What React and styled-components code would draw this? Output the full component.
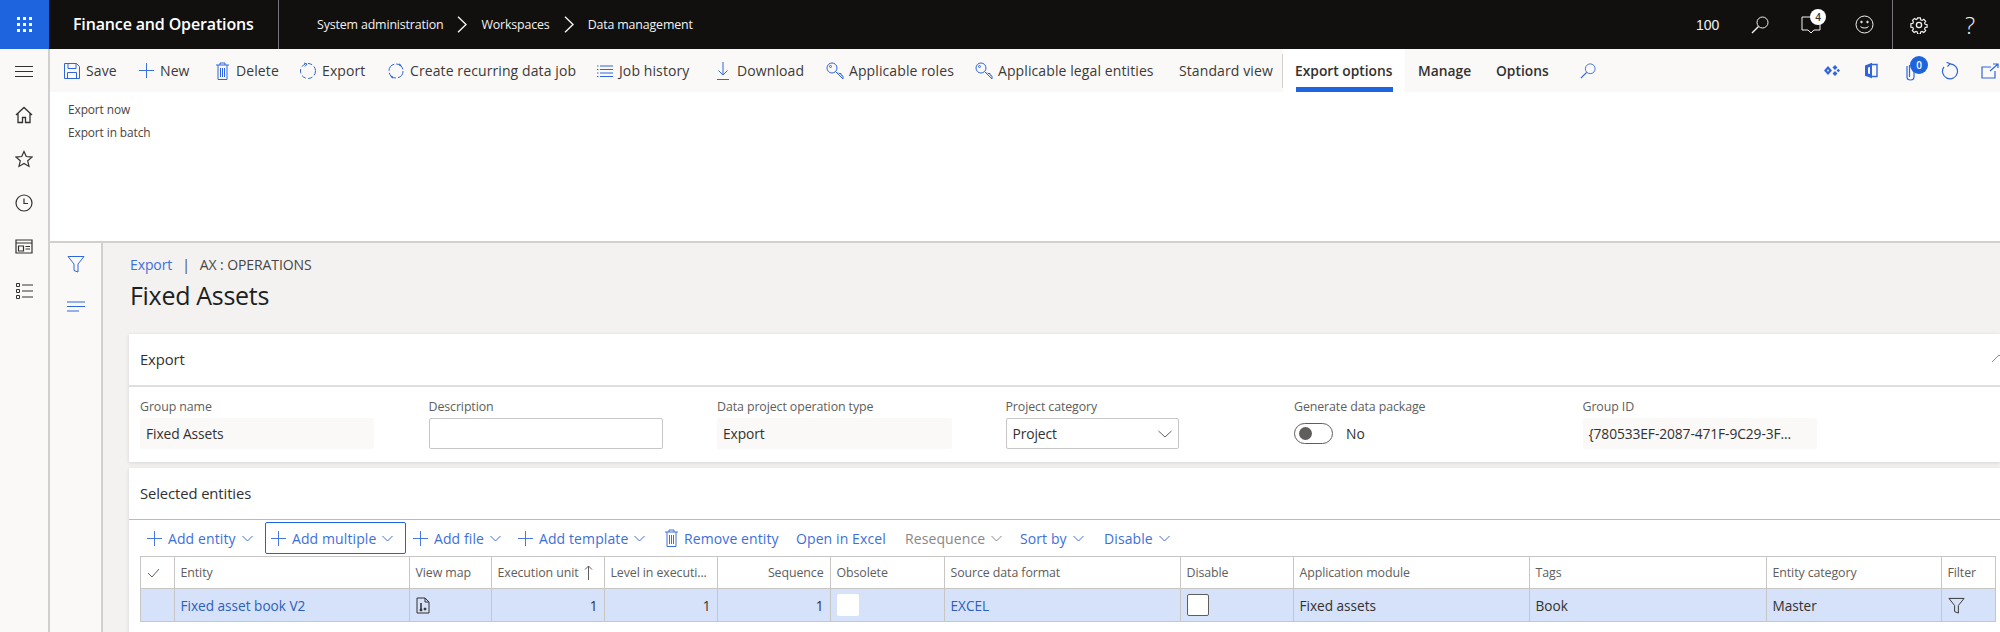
import React from "react"
import styled, {createGlobalStyle} from "styled-components"

const BLUE = "#2f66dc"
const LINE = "#c8c6c4"
const GRID_COLS = "33.5px 235px 82px 113px 113px 113px 114px 236px 113px 236px 237px 175px 54px"

const Global = createGlobalStyle`
  html, body {
    margin: 0;
    width: 2000px;
    height: 632px;
    overflow: hidden;
    background: #fff;
    font-family: "Open Sans", "Noto Sans", sans-serif;
    color: #323130;
  }
  svg { display: block; flex: none; }
`

const TopBar = styled.header`
  display: flex;
  align-items: center;
  height: 49px;
  background: #11100f;
  color: #fff;
`

const Waffle = styled.div`
  display: grid;
  grid-template-columns: repeat(3, 3px);
  gap: 3px;
  align-content: center;
  justify-content: center;
  width: 49px;
  height: 49px;
  background: #1f64df;

  span { width: 3px; height: 3px; background: #fff; }
`

const AppName = styled.div`
  width: 205px;
  height: 49px;
  line-height: 48px;
  padding-left: 24px;
  font-size: 16px;
  font-weight: 600;
  letter-spacing: -0.15px;
  border-right: 1px solid #77757a;
`

const Crumbs = styled.nav`
  display: flex;
  align-items: center;
  padding-left: 38px;
  font-size: 12.4px;
  letter-spacing: -0.15px;
  color: #f3f2f1;
  gap: 14px;
`

const TopRight = styled.div`
  display: flex;
  align-items: center;
  margin-left: auto;
  height: 49px;
  padding-right: 4px;
`

const TopCount = styled.span`
  font-size: 14px;
  width: 39px;
  color: #f3f2f1;
  font-family: "Liberation Sans", sans-serif;
`

const TopIcon = styled.div`
  position: relative;
  display: flex;
  align-items: center;
  justify-content: center;
  width: ${p => p.$w}px;
  height: 49px;
  font-size: 24px;
  font-weight: 300;
  color: #f3f2f1;
  ${p => p.$line && "border-right: 1px solid #77757a;"}
`

const Badge = styled.span`
  position: absolute;
  display: flex;
  align-items: center;
  justify-content: center;
  width: ${p => p.$size}px;
  height: ${p => p.$size}px;
  left: ${p => p.$x}px;
  top: ${p => p.$y}px;
  border-radius: 50%;
  font-size: 10px;
  font-weight: 600;
  background: ${p => p.$bg};
  color: ${p => p.$fg};
`

const Body = styled.div`
  display: flex;
  height: 583px;
`

const Rail = styled.aside`
  display: flex;
  flex-direction: column;
  align-items: center;
  gap: 26px;
  width: 48px;
  padding-top: 13px;
  background: #faf9f8;
  border-right: 2px solid #d2d0ce;
  color: #323130;
`

const Content = styled.div`
  flex: 1;
  min-width: 0;
  display: flex;
  flex-direction: column;
`

const ActionBar = styled.div`
  display: flex;
  align-items: center;
  height: 43px;
  padding-left: 14px;
  background: #faf9f8;
`

const Action = styled.div`
  display: flex;
  align-items: center;
  width: ${p => p.$w}px;
  flex: none;
  font-size: 14px;
  letter-spacing: 0.1px;
  white-space: nowrap;
  color: #3b3a39;
`

const ActionIcon = styled.span`
  display: flex;
  justify-content: center;
  width: 16px;
  margin-right: 6px;
  color: ${BLUE};
`

const TabSep = styled.div`
  width: 1px;
  height: 34px;
  background: #d2d0ce;
`

const ActiveTab = styled.div`
  position: relative;
  width: 110px;
  height: 43px;
  line-height: 43px;
  padding-left: 12px;
  background: #fff;
  font-size: 13.8px;
  font-weight: 600;
  letter-spacing: 0;
  white-space: nowrap;

  &::after {
    content: "";
    position: absolute;
    left: 13px;
    bottom: 0;
    width: 97px;
    height: 5px;
    background: #1f64df;
  }
`

const Tab = styled.div`
  width: ${p => p.$w}px;
  margin-left: ${p => p.$ml || 0}px;
  font-size: 13.8px;
  font-weight: 600;
`

const BarIcons = styled.div`
  display: flex;
  align-items: center;
  margin-left: auto;
  color: ${BLUE};
`

const BarIcon = styled.div`
  position: relative;
  display: flex;
  justify-content: center;
  width: ${p => p.$w}px;
  margin-left: ${p => p.$ml || 0}px;
  color: ${BLUE};
`

const Ribbon = styled.div`
  display: flex;
  flex-direction: column;
  gap: 6px;
  height: 151px;
  padding: 9px 0 0 18px;
  box-sizing: border-box;
  border-bottom: 2px solid #d2d0ce;
  font-size: 11.9px;
  letter-spacing: -0.1px;
  line-height: 17px;
  color: #484644;
`

const Work = styled.div`
  flex: 1;
  display: flex;
  min-height: 0;
`

const SidePane = styled.div`
  display: flex;
  flex-direction: column;
  align-items: center;
  gap: 25px;
  width: 51px;
  padding-top: 12px;
  background: #faf9f8;
  border-right: 2px solid #d2d0ce;
  color: ${BLUE};
`

const Main = styled.main`
  flex: 1;
  min-width: 0;
  padding-left: 26px;
  background: #f3f2f1;
  overflow: hidden;
`

const PageCrumb = styled.div`
  display: flex;
  gap: 10px;
  align-items: center;
  height: 22px;
  margin: 10px 0 0 1px;
  font-size: 14px;
  letter-spacing: -0.1px;
  color: #484644;

  a { color: #3d6fdc; }
`

const PageTitle = styled.h1`
  margin: 3px 0 0 1px;
  height: 34px;
  line-height: 34px;
  font-size: 25px;
  font-weight: 500;
  letter-spacing: -0.3px;
  color: #201f1e;
`

const Card = styled.section`
  background: #fff;
  margin-top: ${p => p.$mt}px;
  box-shadow: 0 1px 4px rgba(0, 0, 0, .12);
`

const CardHead = styled.div`
  display: flex;
  align-items: center;
  justify-content: space-between;
  height: ${p => p.$h}px;
  padding: 0 0 2px 11px;
  box-sizing: border-box;
  font-size: 14.8px;
  font-weight: 500;
  letter-spacing: -0.1px;
  border-bottom: ${p => p.$line};
  color: #323130;
`

const Collapse = styled.span`
  margin-right: -7px;
  color: #8a8886;
`

const Fields = styled.div`
  display: grid;
  grid-template-columns: repeat(6, 288.5px);
  height: 75px;
  padding: 12px 0 0 11px;
  box-sizing: border-box;
`

const Label = styled.div`
  height: 19px;
  line-height: 16px;
  font-size: 12.4px;
  letter-spacing: -0.1px;
  white-space: nowrap;
  color: #605e5c;
`

const Value = styled.div`
  display: flex;
  align-items: center;
  justify-content: space-between;
  width: ${p => p.$w}px;
  height: 31px;
  box-sizing: border-box;
  padding: 0 6px;
  font-size: 13.8px;
  letter-spacing: -0.1px;
  white-space: nowrap;
  color: #323130;
  background: ${p => (p.$edit ? "#fff" : "#faf9f8")};
  border: ${p => (p.$edit ? `1.5px solid ${LINE}` : "none")};
  border-radius: 2px;
`

const ToggleRow = styled.div`
  display: flex;
  align-items: center;
  gap: 13px;
  height: 31px;
  font-size: 13.8px;
`

const Toggle = styled.div`
  display: flex;
  align-items: center;
  width: 39px;
  height: 21px;
  box-sizing: border-box;
  padding-left: 4px;
  border: 1px solid #605e5c;
  border-radius: 11px;

  &::before {
    content: "";
    width: 13px;
    height: 13px;
    border-radius: 50%;
    background: #605e5c;
  }
`

const GridWrap = styled.div`
  margin-left: 11px;
  padding-bottom: 20px;
`

const GridTools = styled.div`
  display: flex;
  align-items: center;
  height: 36px;
`

const GridTool = styled.div`
  display: flex;
  align-items: center;
  flex: none;
  width: ${p => p.$w}px;
  height: 32px;
  box-sizing: border-box;
  padding-left: ${p => (p.$focus ? 5 : 7)}px;
  gap: 6px;
  font-size: 14px;
  letter-spacing: 0.1px;
  white-space: nowrap;
  color: ${p => (p.$off ? "#8a8886" : "#3d6fdc")};
  border: ${p => (p.$focus ? "1px solid #1f64df" : "none")};
  border-radius: 2px;
`

const GridRow = styled.div`
  display: grid;
  grid-template-columns: ${GRID_COLS};
  height: ${p => p.$h}px;
  box-sizing: border-box;
  background: ${p => p.$bg};
  border-top: ${p => p.$top};
  border-bottom: ${p => p.$bottom};
  border-left: 1.5px solid ${LINE};
  width: 1856px;
`

const GridCell = styled.div`
  display: flex;
  align-items: center;
  justify-content: ${p => (p.$right ? "flex-end" : "flex-start")};
  gap: 5px;
  min-width: 0;
  padding: 0 6px;
  box-sizing: border-box;
  border-right: 1.5px solid ${LINE};
  font-size: ${p => (p.$head ? 12.4 : 13.6)}px;
  letter-spacing: ${p => (p.$head ? -0.1 : 0)}px;
  white-space: nowrap;
  color: ${p => (p.$head ? "#605e5c" : p.$link ? "#2f5eb8" : "#323130")};
`

const Check = styled.div`
  width: 22px;
  height: 22px;
  box-sizing: border-box;
  background: #fff;
  border-radius: 2px;
  border: ${p => (p.$edit ? "1px solid #605e5c" : "none")};
`

const Thin = ({w = 18, h = 18, box = "0 0 18 18", sw = 1, children}) => (
    <svg width={w} height={h} viewBox={box} fill="none" stroke="currentColor" strokeWidth={sw}>{children}</svg>
)

const Plus = () => <Thin w={15} h={15} box="0 0 16 16"><path d="M8 0v16M0 8h16"/></Thin>
const ChevDown = () => <Thin w={11} h={7} box="0 0 11 7"><path d="M.5 1l5 5 5-5"/></Thin>
const ChevRight = () => <Thin w={10} h={17} box="0 0 10 17" sw={1.4}><path d="M1 .7l8 7.800-8 7.800"/></Thin>
const Trash = () => (
    <Thin w={13} h={18} box="0 0 13 18">
        <path d="M0 3h13M4 3V1h5v2M2 3v14.500h9V3M4.500 6v9M6.500 6v9M8.500 6v9"/>
    </Thin>
)
const Key = () => (
    <Thin>
        <circle cx="6" cy="6" r="5"/>
        <path d="M9.500 9.500L17 17v-3l-2-1v-1.500h-2l-1-1"/>
        <circle cx="4.500" cy="4.500" r="1"/>
    </Thin>
)
const Funnel = ({size = 18}) => <Thin w={size} h={size}><path d="M1 1.500h16l-6 7.500v8l-4-1.500V9z"/></Thin>
const Search = ({size = 18}) => (
    <Thin w={size} h={size} box="0 0 18 18"><circle cx="11.500" cy="6.500" r="5.500"/><path d="M7.500 10.500L1 17" strokeWidth="1.400"/></Thin>
)

function MapIcon() {
    return (
        <Thin w={14} h={17} box="0 0 14 17">
            <path d="M1 1h8l4 4v11H1zM9 1v4h4"/>
            <path d="M5 6v7" strokeWidth="1.500"/>
            <circle cx="9" cy="12" r="1" fill="currentColor"/>
            <circle cx="5" cy="13" r="1" fill="currentColor"/>
        </Thin>
    )
}

const actions = [
    {w: 74, label: "Save", icon: (
        <Thin><path d="M1.500 1.500h12l3 3v12h-15zM5 1.500v5h8v-5M4.500 16.500v-6h9v6"/></Thin>
    )},
    {w: 76, label: "New", icon: <Plus/>},
    {w: 86, label: "Delete", icon: <Trash/>},
    {w: 88, label: "Export", icon: (
        <Thin><circle cx="9" cy="9" r="7.500" strokeDasharray="4.500 2.500"/><path d="M5 1l3 1-2 2.500"/></Thin>
    )},
    {w: 209, label: "Create recurring data job", icon: (
        <Thin>
            <circle cx="9" cy="9" r="7" strokeDasharray="9 2"/>
            <path d="M12 2l2 2M4 14l2 2" strokeWidth="1.600"/>
        </Thin>
    )},
    {w: 118, label: "Job history", icon: (
        <Thin><path d="M4 4h13M4 7.500h13M4 11h13M4 14.500h13M1 4h1.500M1 7.500h1.500M1 11h1.500M1 14.500h1.500"/></Thin>
    )},
    {w: 112, label: "Download", icon: <Thin w={12} h={18} box="0 0 12 18"><path d="M6 0v13M1.500 8.500L6 13l4.500-4.500M0 17.500h12"/></Thin>},
    {w: 149, label: "Applicable roles", icon: <Key/>},
    {w: 203, label: "Applicable legal entities", icon: <Key/>},
]

const gridTools = [
    {w: 125, label: "Add entity", plus: true, chev: true},
    {w: 141, label: "Add multiple", plus: true, chev: true, focus: true},
    {w: 105, label: "Add file", plus: true, chev: true},
    {w: 147, label: "Add template", plus: true, chev: true},
    {w: 131, label: "Remove entity", trash: true},
    {w: 109, label: "Open in Excel"},
    {w: 115, label: "Resequence", chev: true, off: true},
    {w: 84, label: "Sort by", chev: true},
    {w: 90, label: "Disable", chev: true},
]

const heads = [
    {label: "Entity"},
    {label: "View map"},
    {label: "Execution unit", sort: true},
    {label: "Level in executi..."},
    {label: "Sequence", right: true},
    {label: "Obsolete"},
    {label: "Source data format"},
    {label: "Disable"},
    {label: "Application module"},
    {label: "Tags"},
    {label: "Entity category"},
    {label: "Filter"},
]

export default function App() {
    return (
        <>
            <Global/>
            <TopBar>
                <Waffle>{Array.from({length: 9}, (_, i) => <span key={i}/>)}</Waffle>
                <AppName>Finance and Operations</AppName>
                <Crumbs>
                    <span>System administration</span>
                    <ChevRight/>
                    <span>Workspaces</span>
                    <ChevRight/>
                    <span>Data management</span>
                </Crumbs>
                <TopRight>
                    <TopCount>100</TopCount>
                    <TopIcon $w={50}><Search/></TopIcon>
                    <TopIcon $w={52}>
                        <Thin w={20} h={18} box="0 0 20 18"><path d="M1 1h18v13h-6l-3 3-3-3H1z"/></Thin>
                        <Badge $size={16} $x={25} $y={9} $bg="#fff" $fg="#323130">4</Badge>
                    </TopIcon>
                    <TopIcon $w={55} $line>
                        <Thin w={19} h={19} box="0 0 19 19">
                            <circle cx="9.500" cy="9.500" r="8.500"/>
                            <path d="M5.500 11.500c1 2 7 2 8 0"/>
                            <circle cx="6.500" cy="7" r=".8" fill="currentColor"/>
                            <circle cx="12.500" cy="7" r=".8" fill="currentColor"/>
                        </Thin>
                    </TopIcon>
                    <TopIcon $w={51}>
                        <Thin w={18} h={18} box="0 0 18 18" sw={1.3}>
                            <circle cx="9" cy="9" r="2.600"/>
                            <path d="M7.500 1h3l.4 2.200 1.500.7 1.900-1.200 2.100 2.100-1.200 1.900.7 1.500 2.100.4v2.800l-2.100.4-.7 1.500 1.200 1.900-2.100 2.100-1.900-1.200-1.500.7-.4 2.200h-3l-.4-2.200-1.500-.7-1.900 1.200-2.100-2.100 1.200-1.900-.7-1.500-2.100-.4V7.600l2.100-.4.7-1.500L1.800 3.800l2.100-2.100 1.900 1.200 1.300-.7z" transform="translate(.9 .9) scale(.9)"/>
                        </Thin>
                    </TopIcon>
                    <TopIcon $w={52}>?</TopIcon>
                </TopRight>
            </TopBar>
            <Body>
                <Rail>
                    <Thin><path d="M0 4.500h18M0 9.500h18M0 14.500h18"/></Thin>
                    <Thin sw={1.300}><path d="M1 9l8-7.500L17 9M3 7.500V16.500h4.500v-5h3v5H15V7.500"/></Thin>
                    <Thin sw={1.200}><path d="M9 1.500l2.300 5 5.700.600-4.300 3.700 1.300 5.600L9 13.500l-5 2.900 1.300-5.600L1 7.100l5.700-.600z"/></Thin>
                    <Thin sw={1.200}><circle cx="9" cy="9" r="8"/><path d="M9 4.500v5h4"/></Thin>
                    <Thin sw={1.200}><path d="M1 2h16v13H1zM1 5h16M3.500 8h5v5h-5zM10.500 8.500H15M10.500 11H15" /></Thin>
                    <Thin w={18} h={18}><path d="M7 3h11M7 9h11M7 15h11M1.500 1.500h3v3h-3zM1.500 7.500h3v3h-3zM1.500 13.500h3v3h-3z"/></Thin>
                </Rail>
                <Content>
                    <ActionBar>
                        {actions.map(a => (
                            <Action key={a.label} $w={a.w}>
                                <ActionIcon>{a.icon}</ActionIcon>
                                {a.label}
                            </Action>
                        ))}
                        <Action $w={103}>Standard view</Action>
                        <TabSep/>
                        <ActiveTab>Export options</ActiveTab>
                        <Tab $w={78} $ml={13}>Manage</Tab>
                        <Tab $w={84}>Options</Tab>
                        <BarIcon $w={16}><Search size={16}/></BarIcon>
                        <BarIcons>
                            <BarIcon $w={40}>
                                <svg width="16" height="11" viewBox="0 0 16 11" fill="currentColor">
                                    <path d="M0 5.500L4 1l4 4.500L4 10zM3 5.500l1 1.200 1-1.200-1-1.200z" fillRule="evenodd"/>
                                    <path d="M8.500 2.500L11 0l2.500 2.500L11 5zM8.500 8.500L11 6l2.500 2.500L11 11zM12.500 5.500L14.300 3.700 16 5.500 14.300 7.300z"/>
                                </svg>
                            </BarIcon>
                            <BarIcon $w={38}>
                                <Thin w={14} h={17} box="0 0 14 17">
                                    <path d="M1 3.500L8 .8v15.400l-7-2.500zM4 5.500v6l2 .6V5z" fill="currentColor" stroke="none" fillRule="evenodd"/>
                                    <path d="M8 2.500h5v12H8" strokeWidth="1.400"/>
                                </Thin>
                            </BarIcon>
                            <BarIcon $w={42}>
                                <Thin w={10} h={20} box="0 0 10 20">
                                    <path d="M1 5v11c0 4 7 4 7 0V3" strokeWidth="1.200"/>
                                    <path d="M3.500 4v12" strokeWidth="1.200"/>
                                </Thin>
                                <Badge $size={18} $x={20} $y={-5} $bg="#1f64df" $fg="#fff">0</Badge>
                            </BarIcon>
                            <BarIcon $w={36}>
                                <Thin sw={1.200} w={18} h={18}><path d="M5.500.3L9 1.800 6.500 4.500"/><path d="M9 1.800a7.500 7.500 0 1 1-6 3"/></Thin>
                            </BarIcon>
                            <BarIcon $w={20} $ml={12}>
                                <Thin sw={1.200} w={18} h={16} box="0 0 18 16"><path d="M10 4H1v11h13V8M9 8l8-7M12 1h5v4"/></Thin>
                            </BarIcon>
                        </BarIcons>
                    </ActionBar>
                    <Ribbon>
                        <span>Export now</span>
                        <span>Export in batch</span>
                    </Ribbon>
                    <Work>
                        <SidePane>
                            <Funnel/>
                            <Thin><path d="M0 4h18M0 8.500h18M0 13h12"/></Thin>
                        </SidePane>
                        <Main>
                            <PageCrumb>
                                <a>Export</a>
                                <span>|</span>
                                <span>AX : OPERATIONS</span>
                            </PageCrumb>
                            <PageTitle>Fixed Assets</PageTitle>
                            <Card $mt={22}>
                                <CardHead $h={53} $line="2px solid #e1dfdd">
                                    Export
                                    <Collapse><Thin w={16} h={9} box="0 0 16 9"><path d="M1 8l7-7 7 7"/></Thin></Collapse>
                                </CardHead>
                                <Fields>
                                    <div>
                                        <Label>Group name</Label>
                                        <Value $w={234}>Fixed Assets</Value>
                                    </div>
                                    <div>
                                        <Label>Description</Label>
                                        <Value $w={234} $edit/>
                                    </div>
                                    <div>
                                        <Label>Data project operation type</Label>
                                        <Value $w={235}>Export</Value>
                                    </div>
                                    <div>
                                        <Label>Project category</Label>
                                        <Value $w={173} $edit>
                                            Project
                                            <Thin w={14} h={8} box="0 0 14 8"><path d="M.5 1l6.500 6 6.500-6" stroke="#605e5c"/></Thin>
                                        </Value>
                                    </div>
                                    <div>
                                        <Label>Generate data package</Label>
                                        <ToggleRow><Toggle/>No</ToggleRow>
                                    </div>
                                    <div>
                                        <Label>Group ID</Label>
                                        <Value $w={234}>{"{780533EF-2087-471F-9C29-3F..."}</Value>
                                    </div>
                                </Fields>
                            </Card>
                            <Card $mt={6}>
                                <CardHead $h={52} $line="1.5px solid #bdbbb9">Selected entities</CardHead>
                                <GridWrap>
                                    <GridTools>
                                        {gridTools.map(t => (
                                            <GridTool key={t.label} $w={t.w} $focus={t.focus} $off={t.off}>
                                                {t.plus && <Plus/>}
                                                {t.trash && <Trash/>}
                                                {t.label}
                                                {t.chev && <ChevDown/>}
                                            </GridTool>
                                        ))}
                                    </GridTools>
                                    <GridRow $h={33} $bg="#fff" $top={`1.5px solid ${LINE}`} $bottom={`1.5px solid ${LINE}`}>
                                        <GridCell $head>
                                            <Thin w={13} h={10} box="0 0 13 10"><path d="M1 5l4 4 7-8" stroke="#605e5c"/></Thin>
                                        </GridCell>
                                        {heads.map(h => (
                                            <GridCell key={h.label} $head $right={h.right}>
                                                {h.label}
                                                {h.sort && <Thin w={9} h={15} box="0 0 9 15"><path d="M4.500 15V1M1 4.500L4.500 1 8 4.500" stroke="#605e5c"/></Thin>}
                                            </GridCell>
                                        ))}
                                    </GridRow>
                                    <GridRow $h={33} $bg="#d5e2f9" $bottom={`1.5px solid ${LINE}`}>
                                        <GridCell/>
                                        <GridCell $link>Fixed asset book V2</GridCell>
                                        <GridCell><MapIcon/></GridCell>
                                        <GridCell $right>1</GridCell>
                                        <GridCell $right>1</GridCell>
                                        <GridCell $right>1</GridCell>
                                        <GridCell><Check/></GridCell>
                                        <GridCell $link>EXCEL</GridCell>
                                        <GridCell><Check $edit/></GridCell>
                                        <GridCell>Fixed assets</GridCell>
                                        <GridCell>Book</GridCell>
                                        <GridCell>Master</GridCell>
                                        <GridCell><Funnel size={17}/></GridCell>
                                    </GridRow>
                                </GridWrap>
                            </Card>
                        </Main>
                    </Work>
                </Content>
            </Body>
        </>
    )
}
